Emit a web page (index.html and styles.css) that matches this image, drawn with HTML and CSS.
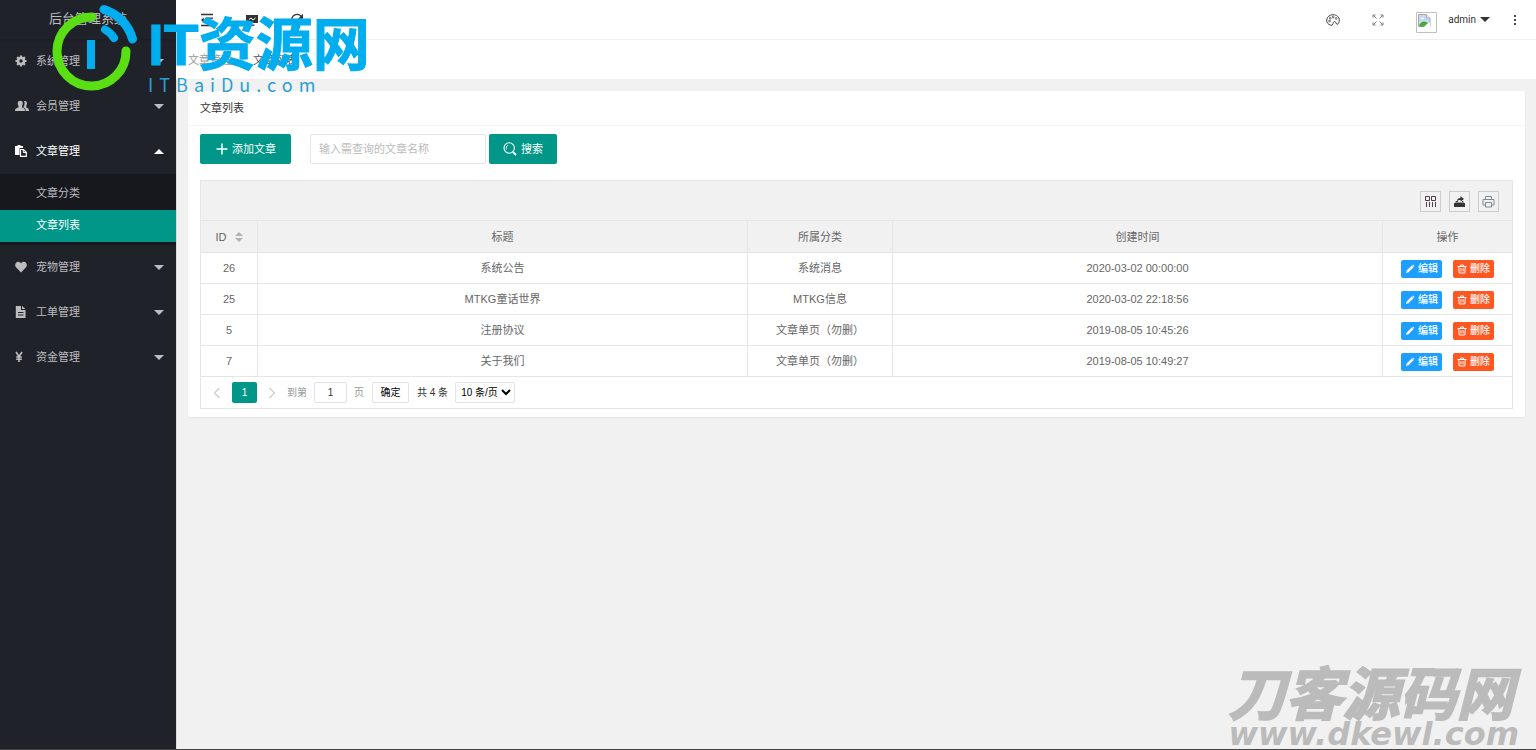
FILE: index.html
```html
<!DOCTYPE html>
<html lang="zh-CN">
<head>
<meta charset="utf-8">
<title>后台管理系统</title>
<link rel="stylesheet" href="styles.css">
</head>
<body>
<svg class="defs" aria-hidden="true">
  <symbol id="pen" viewBox="0 0 10 10"><path d="M1 9l.7-2.500 5-5 1.800 1.800-5 5zM7.200 1.200l.8-.7 1.500 1.500-.7.8z" fill="currentColor"/></symbol>
  <symbol id="bin" viewBox="0 0 10 10"><path d="M.5 2.500h9M3.500 2.300V1h3v1.300M1.700 2.700l.5 6.300h5.600l.5-6.300M3.900 4.200v3.200M6.100 4.200v3.200" fill="none" stroke="currentColor"/></symbol>
</svg>
<div class="app">
  <aside class="side">
    <div class="logo">后台管理系统</div>
    <nav>
      <a class="item" href="#"><svg class="ico" viewBox="0 0 12 12"><circle cx="6" cy="6" r="3" fill="none" stroke="currentColor" stroke-width="2.600"/><path d="M6 .5v2M6 9.500v2M.5 6h2M9.500 6h2M2.100 2.100l1.400 1.400M8.500 8.500l1.400 1.400M9.900 2.100L8.500 3.500M3.500 8.500L2.100 9.900" stroke="currentColor" stroke-width="2.200"/></svg><span>系统管理</span><i class="caret"></i></a>
      <a class="item" href="#"><svg class="ico wide" viewBox="0 0 14 12"><path d="M9 1.200c3.200-.6 3.600 2.300 2.200 4.800v1.200l1.900 1.300c.7.500.9 1.500.9 2.500h-3.300c0-2-.5-2.600-2.400-3.800C9.800 5 10 2.700 9 1.200z" fill="currentColor"/><path d="M5.300 .8c3 0 3 3 1.700 5.200v1.200L9 8.500c.8.500 1 1.500 1 2.500H0c0-1 .2-2 1-2.500l2.500-1.300V6C2.300 3.800 2.300.8 5.300.8z" fill="currentColor"/></svg><span>会员管理</span><i class="caret"></i></a>
      <a class="item open" href="#"><svg class="ico" viewBox="0 0 12 12"><path d="M0 1h2.500V0h3v1H8v2H4.500v7H0z" fill="currentColor"/><path d="M5.500 4.500h3l2.800 2.800v4H5.500z" fill="none" stroke="currentColor" stroke-width="1.200"/><path d="M8.300 4.500v3h3" fill="none" stroke="currentColor"/></svg><span>文章管理</span><i class="caret up"></i></a>
      <div class="sub">
        <a href="#">文章分类</a>
        <a class="on" href="#">文章列表</a>
      </div>
      <a class="item" href="#"><svg class="ico" viewBox="0 0 12 12"><path d="M6 11.500L1 6.300C-1 3.500 1 .8 3.200.8 4.600.8 5.500 1.500 6 2.500 6.500 1.500 7.400.8 8.800.8 11 .8 13 3.500 11 6.300z" fill="currentColor"/></svg><span>宠物管理</span><i class="caret"></i></a>
      <a class="item" href="#"><svg class="ico" viewBox="0 0 12 12"><path d="M.8 0H6v4h4.500v8H.8zM7 0l3.500 3H7z" fill="currentColor"/><path d="M3 6.500h5.500M3 9h5.500" stroke="#20222a" stroke-width="1.200"/></svg><span>工单管理</span><i class="caret"></i></a>
      <a class="item" href="#"><svg class="ico" viewBox="0 0 12 12"><path d="M1 1l3 4.500L7 1M4 5.500V11M1.200 6h5.600M1.200 8.300h5.600" fill="none" stroke="currentColor" stroke-width="1.600"/></svg><span>资金管理</span><i class="caret"></i></a>
    </nav>
  </aside>
  <div class="body">
    <header class="top">
      <div class="tools">
        <button aria-label="折叠菜单"><svg width="14" height="14" viewBox="0 0 14 14"><path d="M1 1.500h12M6 5.200h7M6 8.800h7M1 12.500h12" stroke="#333" stroke-width="1.300"/><path d="M3.800 4.500v5L1 7z" fill="#333"/></svg></button>
        <button aria-label="前台首页"><svg width="14" height="14" viewBox="0 0 14 14"><path d="M1 2h12v8H1zM4.500 11.500h5v1.200h-5z" fill="#333"/><path d="M4 6.500l2-1.500 2 2 2.500-2" fill="none" stroke="#fff"/></svg></button>
        <button aria-label="刷新"><svg width="14" height="14" viewBox="0 0 14 14"><path d="M11.800 4A5.500 5.500 0 1 0 12.500 8" fill="none" stroke="#333" stroke-width="1.400"/><path d="M13 .8v5H8z" fill="#333"/></svg></button>
      </div>
      <div class="user">
        <button aria-label="主题"><svg width="14" height="14" viewBox="0 0 14 14"><path d="M5 12.300C2 11.500.5 9.500.7 7 1 3.700 3.800 1.700 7 1.700c3.500 0 6.300 2.300 6.300 5.300 0 2-.8 4-2 4.300-1.500.2-1-2.800-2.700-2.800C6.500 8.500 7.500 13 5 12.300z" fill="none" stroke="#444"/><g fill="none" stroke="#444" stroke-width=".8"><circle cx="3.500" cy="8" r=".9"/><circle cx="4.300" cy="5.200" r=".9"/><circle cx="7.200" cy="4" r=".9"/><circle cx="10.200" cy="5.500" r=".9"/></g></svg></button>
        <button aria-label="全屏"><svg width="12" height="12" viewBox="0 0 12 12"><path d="M4.500 4.500L1.500 1.500M7.500 4.500l3-3M4.500 7.500l-3 3M7.500 7.500l3 3M1 3.500V1h2.500M8.500 1H11v2.500M1 8.500V11h2.500M8.500 11H11V8.500" fill="none" stroke="#777"/></svg></button>
        <svg class="avatar" viewBox="0 0 21 21" role="img" aria-label="头像"><path d="M.5.500h20v20H.5z" fill="#fff" stroke="#c0c0c0"/><path d="M2.500 2.500h8l3.500 3.500v8.500H2.500z" fill="#c5d8f5" stroke="#aaa"/><path d="M10.500 2.500V6H14" fill="#fff" stroke="#aaa"/><path d="M3 14c1-3 3-4.500 5-4.500S11 11 12 11l-4 3.500H3z" fill="#4aa832"/><path d="M5 7a1.500 1.500 0 0 1 3 0z" fill="#fff"/><path d="M8 15l6-5v5z" fill="#fff"/></svg>
        <a class="name" href="#">admin<i class="caret"></i></a>
        <button class="more" aria-label="更多"><svg width="4" height="12" viewBox="0 0 4 12"><path d="M1 1h2v2H1zM1 5h2v2H1zM1 9h2v2H1z" fill="#444"/></svg></button>
      </div>
    </header>
    <div class="crumbs"><a href="#">文章管理</a><span>/</span><b>文章列表</b></div>
    <main class="card">
      <h1>文章列表</h1>
      <div class="content">
        <form class="search">
          <button class="btn add" type="button"><svg width="12" height="12" viewBox="0 0 12 12"><path d="M6 .5v11M.5 6h11" stroke="#fff" stroke-width="1.500"/></svg>添加文章</button>
          <input type="text" aria-label="文章名称" placeholder="输入需查询的文章名称">
          <button class="btn" type="button"><svg width="14" height="14" viewBox="0 0 14 14"><circle cx="6.200" cy="6" r="5.200" fill="none" stroke="#fff" stroke-width="1.100"/><path d="M10 10l3 3" stroke="#fff" stroke-width="1.800"/><path d="M3.300 7.500C2.700 5.500 3.500 4 5 3.300" fill="none" stroke="#fff" stroke-width=".8"/></svg>搜索</button>
        </form>
        <section class="grid">
          <div class="bar">
            <button aria-label="筛选列"><svg width="13" height="13" viewBox="0 0 13 13"><path d="M1.500 1.500h4v4h-4zM7.500 1.500h4v4h-4zM2.500 7v5M5.500 7v5M8.500 7v5M11.500 7v5" fill="none" stroke="#4d3d4d"/></svg></button>
            <button aria-label="导出"><svg width="13" height="13" viewBox="0 0 13 13"><path d="M1 8h11v4H1zM3 6h2v1h4V6h1l1 1.500H2z" fill="#333"/><path d="M4 6c0-2 1.500-3 3.500-3V1L11 4 7.500 6.500V5C6 5 5 5.500 4 6z" fill="#333"/></svg></button>
            <button aria-label="打印"><svg width="13" height="13" viewBox="0 0 13 13"><path d="M3.500 4.500v-3h6v3M3.500 10H1V4.500h11V10H9.500M3.500 7.500h6v4.500h-6z" fill="none" stroke="#7e8a96"/></svg></button>
          </div>
          <table>
            <colgroup><col class="c-id"><col><col class="c-cat"><col><col class="c-op"></colgroup>
            <thead><tr><th>ID<svg class="sort" viewBox="0 0 8 10"><path d="M0 4l4-4 4 4zM0 6h8l-4 4z" fill="#b2b2b2"/></svg></th><th>标题</th><th>所属分类</th><th>创建时间</th><th>操作</th></tr></thead>
            <tbody>
              <tr><td>26</td><td>系统公告</td><td>系统消息</td><td>2020-03-02 00:00:00</td><td><div class="ops"><button class="edit"><svg><use href="#pen"/></svg>编辑</button><button class="del"><svg><use href="#bin"/></svg>删除</button></div></td></tr>
              <tr><td>25</td><td>MTKG童话世界</td><td>MTKG信息</td><td>2020-03-02 22:18:56</td><td><div class="ops"><button class="edit"><svg><use href="#pen"/></svg>编辑</button><button class="del"><svg><use href="#bin"/></svg>删除</button></div></td></tr>
              <tr><td>5</td><td>注册协议</td><td>文章单页（勿删）</td><td>2019-08-05 10:45:26</td><td><div class="ops"><button class="edit"><svg><use href="#pen"/></svg>编辑</button><button class="del"><svg><use href="#bin"/></svg>删除</button></div></td></tr>
              <tr><td>7</td><td>关于我们</td><td>文章单页（勿删）</td><td>2019-08-05 10:49:27</td><td><div class="ops"><button class="edit"><svg><use href="#pen"/></svg>编辑</button><button class="del"><svg><use href="#bin"/></svg>删除</button></div></td></tr>
            </tbody>
          </table>
          <div class="pager">
            <button class="arrow" aria-label="上一页"><svg width="8" height="12" viewBox="0 0 8 12"><path d="M6.500 1l-5 5 5 5" fill="none" stroke="#ccc" stroke-width="1.200"/></svg></button>
            <button class="cur">1</button>
            <button class="arrow" aria-label="下一页"><svg width="8" height="12" viewBox="0 0 8 12"><path d="M1.500 1l5 5-5 5" fill="none" stroke="#ccc" stroke-width="1.200"/></svg></button>
            <label class="jump">到第<input type="text" value="1">页</label>
            <button class="ok">确定</button>
            <span class="total">共 4 条</span>
            <select aria-label="每页条数"><option>10 条/页</option></select>
          </div>
        </section>
      </div>
    </main>
  </div>
</div>
<div class="mark-a">
  <svg width="90" height="92" viewBox="48 0 90 92"><g fill="none" stroke-linecap="round"><path d="M92 17A34.500 34.500 0 1 0 126 51" stroke="#5ade14" stroke-width="9"/><path d="M104 9.500A42.500 42.500 0 0 1 132.500 39" stroke="#00adef" stroke-width="9"/><path d="M105 29.500A25 25 0 0 1 114 38" stroke="#00adef" stroke-width="8"/></g><path d="M87 40h8v29h-8z" fill="#00adef"/></svg>
  <div class="mark-text"><strong>IT资源网</strong><small>ITBaiDu.com</small></div>
</div>
<div class="mark-b"><strong>刀客源码网</strong><small>www.dkewl.com</small></div>
</body>
</html>
```

FILE: styles.css
```css
* { box-sizing: border-box; }
body {
  margin: 0;
  font: 11px/16px "Liberation Sans", "Noto Sans CJK SC", sans-serif;
  color: #666;
  background: #f1f1f1;
}
button, input, select { font: inherit; margin: 0; }
button { border: 0; padding: 0; background: none; cursor: pointer; display: flex; align-items: center; justify-content: center; }
a { color: inherit; text-decoration: none; }
svg { display: block; flex: none; }
.defs { position: absolute; width: 0; height: 0; }
.app { display: flex; min-height: 100vh; border-bottom: 1px solid #444; }

.side { width: 176px; flex: none; background: #20222a; color: #bcbdbf; }
.logo { height: 39px; line-height: 38px; font-size: 13px; text-align: center; box-shadow: 0 1px 2px rgba(0, 0, 0, .15); }
.item { display: flex; align-items: center; height: 45px; padding: 0 12px 1px 15px; }
.item span { flex: 1; }
.ico { width: 12px; height: 12px; margin-right: 9px; }
.ico.wide { width: 14px; margin-right: 7px; }
.open { color: #fff; }
.caret { border: 5px solid transparent; border-top-color: currentColor; border-bottom: 0; }
.caret.up { border-top: 0; border-bottom: 5px solid currentColor; }
.sub { background: #17181e; padding: 4px 0 3px; }
.sub a { display: block; height: 32px; line-height: 30px; padding-left: 36px; }
.sub .on { background: #009688; color: #fff; }

.body { flex: 1; min-width: 0; box-shadow: inset 1px 0 #ddd; }
.top { display: flex; justify-content: space-between; align-items: center; height: 40px; background: #fff; border-bottom: 1px solid #eee; }
.tools { display: flex; gap: 31px; padding-left: 24px; }
.user { display: flex; align-items: center; padding-right: 18px; }
.user button { width: 14px; margin-right: 31px; }
.user button.more { width: 6px; margin: 0 0 0 22px; }
.avatar { width: 21px; height: 21px; margin-top: 5px; }
.name { display: flex; align-items: center; gap: 4px; margin-left: 11px; font: 10px/16px Roboto, sans-serif; color: #333; }
.crumbs { display: flex; align-items: center; gap: 9px; height: 40px; padding-left: 12px; background: #fff; color: #999; border-bottom: 1px solid #eee; }
.crumbs b { font-weight: 400; color: #555; }

.card { margin: 11px 11px 0 12px; background: #fff; border-radius: 2px; box-shadow: 0 1px 2px rgba(0, 0, 0, .06); }
.card h1 { margin: 0; padding: 0 12px; font-size: 11px; font-weight: 400; line-height: 34px; color: #333; border-bottom: 1px solid #f6f6f6; }
.content { padding: 8px 12px; }
.search { display: flex; }
.btn { height: 30px; padding: 0 14px; gap: 4px; background: #009688; color: #fff; border-radius: 2px; }
.btn.add { padding: 0 15px 0 16px; margin-right: 19px; }
.search input { width: 176px; height: 30px; margin-right: 3px; padding: 0 8px; border: 1px solid #e6e6e6; border-radius: 2px; }
.search input::placeholder { color: #bbb; }

.grid { margin-top: 16px; border: 1px solid #e6e6e6; }
.bar { display: flex; justify-content: flex-end; align-items: center; gap: 8px; height: 40px; padding: 2px 13px 0; background: #f1f1f1; border-bottom: 1px solid #e6e6e6; }
.bar button { width: 21px; height: 21px; border: 1px solid #ccc; }
table { width: 100%; table-layout: fixed; border-collapse: separate; border-spacing: 0; }
th, td { height: 31px; padding: 0; font-weight: 400; text-align: center; border: solid #e6e6e6; border-width: 0 1px 1px 0; }
th { height: 32px; background: #f1f1f1; }
th:last-child, td:last-child { border-right: 0; }
.c-id { width: 57px; }
.c-cat { width: 145px; }
.c-op { width: 129px; }
.sort { display: inline-block; width: 8px; height: 10px; margin-left: 8px; vertical-align: -1px; }
.ops { display: flex; justify-content: center; gap: 11px; padding-top: 2px; }
.ops button { width: 41px; height: 18px; gap: 3px; font-size: 10px; font-weight: 500; color: #fff; border-radius: 2px; }
.ops svg { width: 10px; height: 10px; }
.edit { background: #1e9fff; }
.del { background: #ff5722; }

.pager { display: flex; align-items: center; height: 31px; padding-left: 12px; font-size: 10px; color: #333; }
.pager .arrow { width: 8px; }
.cur { width: 25px; height: 21px; margin: 0 11px; background: #009688; color: #fff; border-radius: 2px; }
.jump { display: flex; align-items: center; margin: 0 8px 0 11px; color: #999; }
.jump input { width: 33px; height: 21px; margin: 0 7px; padding: 0; text-align: center; color: #333; border: 1px solid #e2e2e2; border-radius: 2px; }
.ok { width: 37px; height: 21px; border: 1px solid #e2e2e2; border-radius: 2px; color: #000; }
.total { margin: 0 7px 0 8px; }
.pager select { width: 60px; height: 21px; padding: 0 0 0 1px; background: #fff; color: #000; border: 1px solid #e2e2e2; border-radius: 2px; }

.mark-a, .mark-b { position: absolute; pointer-events: none; }
.mark-a { left: 48px; top: 0; display: flex; color: #00adef; }
.mark-text { padding: 17px 0 0 10px; }
.mark-text strong { display: block; font-size: 57px; line-height: 57px; -webkit-text-stroke: 1px #00adef; }
.mark-text small { display: block; font: 18px/20px "Noto Sans CJK SC", sans-serif; letter-spacing: 6px; color: #2b9fd0; }
.mark-b { right: 17px; bottom: 0; font-style: italic; color: #bbb; }
.mark-b strong { display: block; font-size: 57px; line-height: 46px; -webkit-text-stroke: 2px #bbb; }
.mark-b small { display: block; font: italic bold 32px/32px "DejaVu Sans", sans-serif; }
```
